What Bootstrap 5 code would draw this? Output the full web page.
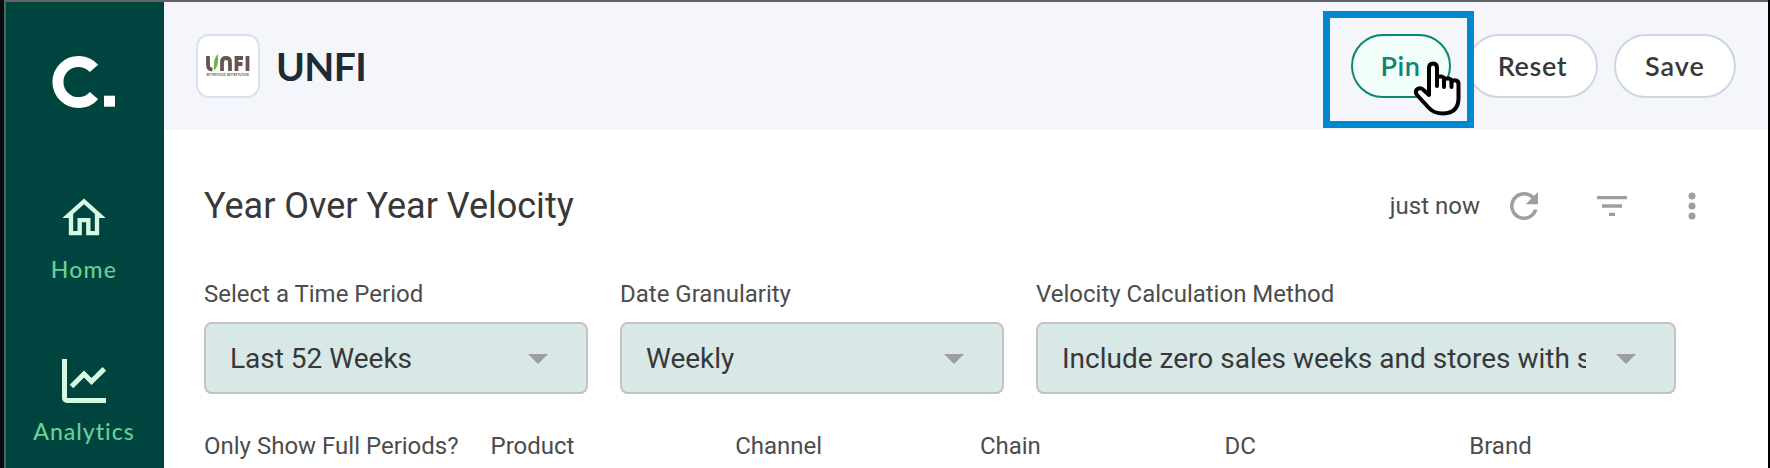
<!DOCTYPE html>
<html lang="en">
<head>
<meta charset="utf-8">
<title>UNFI – Year Over Year Velocity</title>
<link rel="stylesheet" href="https://cdn.jsdelivr.net/npm/bootstrap@5.3.0/dist/css/bootstrap.min.css">
<style>
  body { font-family: Roboto, sans-serif; height: 468px; overflow: hidden; background: #000; }
  .app-window { height: 468px; width: 1764px; border-top: 2px solid #646464; border-left: 2px solid #3f6e69; margin-left: 4px; }
  .app-frame { width: 1770px; background: linear-gradient(90deg, #0c0c0e 4px, #000 4px); }
  .side-nav { width: 158px; background: #00443f; font-family: Lato, sans-serif; }
  .side-logo { height: 128px; }
  .side-link { color: #6bcf95; font-size: 23px; line-height: 30px; font-weight: 500; text-decoration: none; white-space: nowrap; letter-spacing: 1px; font-variant-ligatures: none; padding-right: 2px; }
  .side-link svg { display: block; }
  .link-home { padding-top: 62px; }
  .link-home span { margin-top: 10px; letter-spacing: 1.3px; }
  .link-analytics { padding-top: 75px; }
  .link-analytics span { margin-top: 13px; }
  .content-pane { width: 1604px; }
  .top-bar { height: 128px; background: #f5f6fb; padding: 0 32px 0 32px; font-family: Lato, sans-serif; }
  .brand-tile { width: 64px; height: 64px; border: 2px solid #d8e1ed; border-radius: 13px; background: #fff; }
  .brand-tile svg { overflow: visible; }
  .brand-name { font-size: 39px; line-height: 48px; font-weight: 700; color: #1e2a35; letter-spacing: -.6px; }
  .pill { --bs-btn-padding-x: 0; --bs-btn-padding-y: 0; --bs-btn-bg: #fff; --bs-btn-color: #383838; --bs-btn-border-color: #cdd6e1; --bs-btn-border-width: 2px; --bs-btn-font-size: 27px; height: 64px; border-radius: 32px; font-weight: 600; letter-spacing: .6px; }
  .pill-pin { width: 100px; --bs-btn-bg: #f2fefa; --bs-btn-color: #0d8570; --bs-btn-border-color: #0d8570; padding-right: 1px; }
  .pill-reset { width: 131px; }
  .pill-save { width: 122px; letter-spacing: 1px; }
  .pin-marker { left: -28px; top: -23.5px; width: 151px; height: 117px; border: 7px solid #0088ce; z-index: 2; }
  .pin-pointer { left: 62px; top: 24px; z-index: 3; }
  .board { padding: 0 0 0 40px; background: #fff; }
  .board-head { height: 152px; width: 1526px; }
  .board-title { font-size: 36px; line-height: 48px; color: #383838; font-weight: 400; }
  .stamp { font-size: 24px; line-height: 32px; color: #4c4c4c; }
  .icon-refresh { margin-left: 23px; }
  .icon-filter { margin-left: 52px; }
  .icon-more { margin-left: 61px; margin-right: 34px; }
  .fields { margin-top: -4px; }
  .field-label { font-size: 24px; line-height: 32px; color: #4c4c4c; white-space: nowrap; }
  .picker { height: 72px; border: 2px solid #c2c2c2; border-radius: 8px; background: #d7e8e7; padding: 1px 38px 0 24px; font-size: 28px; color: #383838; }
  .picker-text { white-space: nowrap; overflow: hidden; max-width: 524px; }
  .field { width: 384px; }
  .field-wide { width: 640px; }
  .filter-gap { gap: 32px; }
  .filters { margin-top: 36px; }
  .filter-first { width: 286.5px; }
  .filter-cell { width: 244.7px; }
</style>
</head>
<body>
<div class="app-frame">
<div class="app-window d-flex">
  <nav class="side-nav d-flex flex-column flex-shrink-0">
    <div class="side-logo">
      <svg width="158" height="128" viewBox="6 2 158 128" role="img" aria-label="Company logo">
        <path d="M94 68.400A20.600 20.600 0 1 0 94 95.600" fill="none" stroke="#fff" stroke-width="11"/>
        <rect x="104" y="95.700" width="11" height="11" fill="#fff"/>
      </svg>
    </div>
    <a class="side-link link-home d-flex flex-column align-items-center" href="#">
      <svg width="52" height="52" viewBox="0 0 24 24" fill="#d5f9e3"><path d="M12 5.690l5 4.500V18h-2v-6H9v6H7v-7.810l5-4.500M12 3L2 12h3v8h6v-6h2v6h6v-8h3L12 3z"/></svg>
      <span>Home</span>
    </a>
    <a class="side-link link-analytics d-flex flex-column align-items-center" href="#">
      <svg width="44" height="44" viewBox="0 0 44 44" fill="none" stroke="#d5f9e3" stroke-width="5"><path d="M2.500 0V39a2.500 2.500 0 0 0 2.500 2.500H44M9.500 27.500L22 15l7.500 7.500L42.300 9.800"/></svg>
      <span>Analytics</span>
    </a>
  </nav>
  <div class="content-pane d-flex flex-column flex-shrink-0">
    <header class="top-bar d-flex align-items-center">
      <div class="brand-tile d-flex align-items-center justify-content-center">
        <svg width="48" height="24" viewBox="0 0 48 24" role="img" aria-label="UNFI">
          <g fill="none" stroke="#665550" stroke-width="3.800">
            <path d="M4 2V11Q4 15.500 8.500 15.500"/>
            <path d="M18 17V8Q18 4 22 4T26 8V17"/>
            <path d="M32.500 17V4H39M32.500 10H38.500M43.500 2V17"/>
          </g>
          <path d="M14 0Q10 4 10 9V17Q15 13 14 0Z" fill="#69b843"/>
          <text x="2.500" y="21.800" font-size="3.600" font-weight="700" fill="#665550" textLength="43" lengthAdjust="spacingAndGlyphs">BETTER FOOD. BETTER FUTURE.</text>
        </svg>
      </div>
      <div class="brand-name ms-3">UNFI</div>
      <div class="d-flex gap-3 ms-auto">
        <div class="position-relative">
          <button class="btn pill pill-pin">Pin</button>
          <div class="pin-marker position-absolute"></div>
          <svg class="pin-pointer position-absolute" width="54" height="60" viewBox="0 0 54 60" fill="#fff" stroke="#000" stroke-width="4" stroke-linejoin="round" stroke-linecap="round">
            <path d="M16 37V10Q16 5.500 20 5.500T24 10V21Q24 18 28 18.500T31 22Q32 20 35.500 20.500T38.500 24Q40 21.500 43 22.500T45.500 27V39Q46 55 30 55.500Q21 55.500 16 50L4 37Q1.500 33 4.500 31Q8 29 11 32.500Z"/>
            <path d="M24 20V28M31 22V29M38.500 24V29" fill="none"/>
          </svg>
        </div>
        <button class="btn pill pill-reset">Reset</button>
        <button class="btn pill pill-save">Save</button>
      </div>
    </header>
    <main class="board flex-grow-1">
      <div class="board-head d-flex align-items-center justify-content-between">
        <h1 class="board-title mb-0">Year Over Year Velocity</h1>
        <div class="d-flex align-items-center">
          <span class="stamp">just now</span>
          <svg class="icon-refresh" width="42" height="42" viewBox="0 0 24 24" fill="#9e9e9e"><path d="M17.650 6.350A7.958 7.958 0 0 0 12 4a8 8 0 1 0 7.730 10h-2.080A6 6 0 1 1 12 6c1.660 0 3.140.690 4.220 1.780L13 11h7V4l-2.350 2.350z"/></svg>
          <svg class="icon-filter" width="30" height="20" fill="#9e9e9e"><path d="M0 0h30v3.300H0zM5 8.300h20v3.400H5zM12 16.700h6V20h-6z"/></svg>
          <svg class="icon-more" width="8" height="28" fill="#9e9e9e"><circle cx="4" cy="4" r="3.500"/><circle cx="4" cy="14" r="3.500"/><circle cx="4" cy="24" r="3.500"/></svg>
        </div>
      </div>
      <div class="fields d-flex filter-gap">
        <div class="field">
          <div class="field-label mb-2 pb-1">Select a Time Period</div>
          <div class="picker d-flex align-items-center justify-content-between">
            <span class="picker-text">Last 52 Weeks</span>
            <svg class="flex-shrink-0" width="20" height="10" fill="#9e9e9e"><path d="M0 0h20L10 10z"/></svg>
          </div>
        </div>
        <div class="field">
          <div class="field-label mb-2 pb-1">Date Granularity</div>
          <div class="picker d-flex align-items-center justify-content-between">
            <span class="picker-text">Weekly</span>
            <svg class="flex-shrink-0" width="20" height="10" fill="#9e9e9e"><path d="M0 0h20L10 10z"/></svg>
          </div>
        </div>
        <div class="field-wide">
          <div class="field-label mb-2 pb-1">Velocity Calculation Method</div>
          <div class="picker d-flex align-items-center justify-content-between">
            <span class="picker-text">Include zero sales weeks and stores with sales</span>
            <svg class="flex-shrink-0" width="20" height="10" fill="#9e9e9e"><path d="M0 0h20L10 10z"/></svg>
          </div>
        </div>
      </div>
      <div class="filters d-flex field-label">
        <div class="filter-first">Only Show Full Periods?</div>
        <div class="filter-cell">Product</div>
        <div class="filter-cell">Channel</div>
        <div class="filter-cell">Chain</div>
        <div class="filter-cell">DC</div>
        <div class="filter-cell">Brand</div>
      </div>
    </main>
  </div>
</div>
</div>
<script src="https://cdn.jsdelivr.net/npm/bootstrap@5.3.0/dist/js/bootstrap.bundle.min.js"></script>
</body>
</html>
